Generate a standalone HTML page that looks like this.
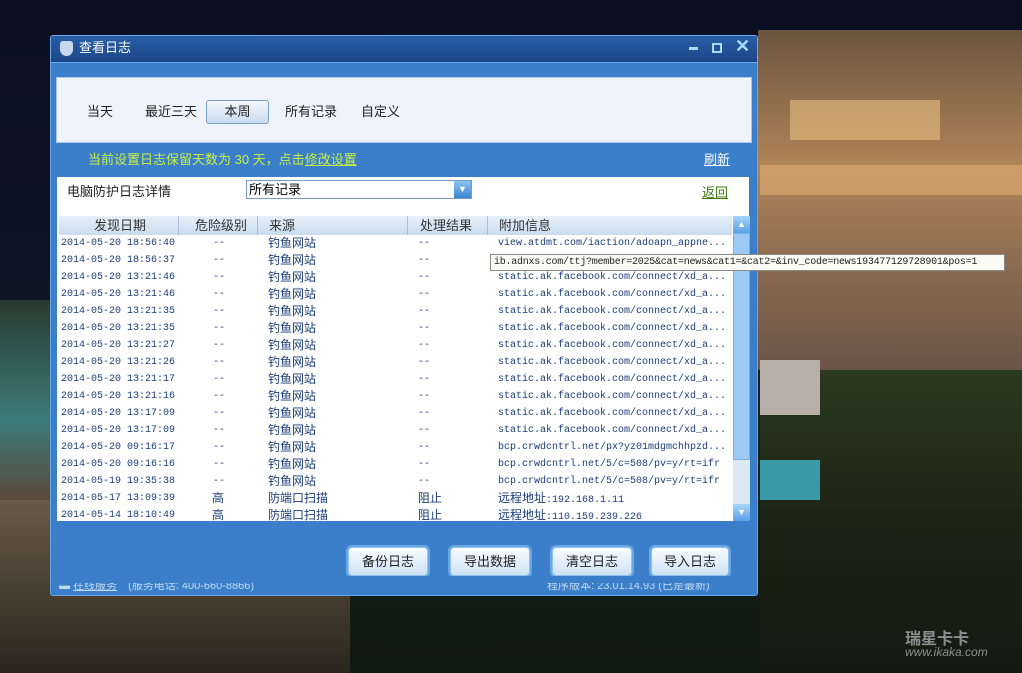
<!DOCTYPE html>
<html><head><meta charset="utf-8"><style>
*{margin:0;padding:0;box-sizing:border-box}
body{width:1022px;height:673px;overflow:hidden;position:relative;font-family:"Liberation Sans","Noto Sans CJK SC",sans-serif;font-size:12px;background:#0b1326}
.abs{position:absolute}
.win{left:50px;top:35px;width:708px;height:561px;background:#3b7fcb;border:1px solid #6aa6e6;border-radius:3px;overflow:hidden}
.title{left:0;top:0;width:706px;height:27px;background:linear-gradient(#2a5ea6,#1b4687);color:#fff;font-size:13px;line-height:24px;padding-left:28px;border-bottom:1px solid #6aa6e6}
.panel{left:5px;top:41px;width:696px;height:66px;background:#eef4f9;border:1px solid #a9c8e8}
.tab{top:64px;height:24px;line-height:24px;font-size:13px;color:#222}
.white{left:6px;top:141px;width:692px;height:344px;background:#fff}
.hdr{top:180px;height:19px;background:linear-gradient(#e7f0fa,#c9dcf0);color:#333;font-size:13px;line-height:19px}
.row{font-family:"Liberation Mono","Noto Sans CJK SC",monospace;font-size:10px;color:#1a3d78;height:17px;line-height:17px;white-space:nowrap}
.cn{font-family:"Liberation Sans","Noto Sans CJK SC",sans-serif;font-size:12px}
.btn{top:511px;width:80px;height:29px;border:1px solid #8fc2f0;border-radius:4px;background:linear-gradient(#f6fbff,#cfe3f6);color:#222;font-size:13px;line-height:27px;text-align:center;box-shadow:0 0 0 2px #6aa8e4}
</style></head><body>
<div class="abs" style="left:0;top:0;width:1022px;height:673px;background:linear-gradient(#0a0f22 0%,#0d1426 40%,#14201e 60%,#0f1a10 100%)"></div>
<div class="abs" style="left:0;top:300px;width:50px;height:200px;background:linear-gradient(#2a3a30,#3c7b7a 60%,#5a4a3a)"></div>
<div class="abs" style="left:0;top:500px;width:350px;height:173px;background:linear-gradient(#6a5a48,#2a261c)"></div>
<div class="abs" style="left:758px;top:30px;width:264px;height:340px;background:linear-gradient(#6b5540,#b08458 40%,#8a6a50 70%,#6a5548)"></div>
<div class="abs" style="left:790px;top:100px;width:150px;height:40px;background:#e8c080;opacity:.6"></div>
<div class="abs" style="left:760px;top:165px;width:262px;height:30px;background:#d8a870;opacity:.7"></div>
<div class="abs" style="left:760px;top:370px;width:262px;height:303px;background:linear-gradient(#2a3a20,#1c2414 50%,#141a10)"></div>
<div class="abs" style="left:760px;top:360px;width:60px;height:55px;background:#b8b0a8"></div>
<div class="abs" style="left:760px;top:460px;width:60px;height:40px;background:#3a9aa8"></div>
<div class="abs" style="left:905px;top:625px;color:#8a8f90;font-size:16px;font-weight:bold">瑞星卡卡</div>
<div class="abs" style="left:905px;top:645px;color:#8a8f90;font-size:12px;font-style:italic">www.ikaka.com</div>

<div class="abs win">
 <div class="abs title">查看日志
  <div class="abs" style="left:9px;top:5px;width:13px;height:15px;background:#c8d8ec;border-radius:3px 3px 7px 7px"></div>
  <div class="abs" style="left:638px;top:11px;width:9px;height:3px;background:#a8dcff"></div>
  <div class="abs" style="left:661px;top:7px;width:10px;height:10px;border:2px solid #a8dcff"></div>
  <div class="abs" style="left:684px;top:-2px;color:#a8dcff;font-size:18px;font-weight:bold">✕</div>
 </div>
  <div class="abs panel"></div>
  <div class="abs tab" style="left:36px">当天</div>
  <div class="abs tab" style="left:94px">最近三天</div>
  <div class="abs tab" style="left:155px;width:63px;border:1px solid #7aa0c8;border-radius:3px;background:linear-gradient(#f4f8fc,#c8dcef);text-align:center;height:24px;line-height:22px">本周</div>
  <div class="abs tab" style="left:234px">所有记录</div>
  <div class="abs tab" style="left:310px">自定义</div>
  <div class="abs" style="left:37px;top:113px;color:#c8f040;font-size:13px">当前设置日志保留天数为 30 天，点击<u>修改设置</u></div>
  <div class="abs" style="left:653px;top:113px;color:#fff;font-size:13px;text-decoration:underline">刷新</div>
  <div class="abs white"></div>
  <div class="abs" style="left:16px;top:145px;font-size:13px;color:#222">电脑防护日志详情</div>
  <div class="abs" style="left:195px;top:144px;width:226px;height:19px;border:1px solid #7a9cc0;font-size:13px;line-height:17px;padding-left:2px;background:#fff">所有记录
   <div class="abs" style="right:0;top:0;width:17px;height:17px;background:linear-gradient(#8cc4f4,#3a86d0);color:#fff;font-size:9px;text-align:center;line-height:17px">▼</div></div>
  <div class="abs" style="left:651px;top:146px;color:#3a7a10;font-size:13px;text-decoration:underline">返回</div>
  <div class="abs hdr" style="left:8px;width:673px"></div>
  <div class="abs hdr" style="left:43px;background:none">发现日期</div>
  <div class="abs hdr" style="left:144px;background:none">危险级别</div>
  <div class="abs hdr" style="left:218px;background:none">来源</div>
  <div class="abs hdr" style="left:369px;background:none">处理结果</div>
  <div class="abs hdr" style="left:448px;background:none">附加信息</div>
  <div class="abs" style="left:127px;top:180px;width:1px;height:19px;background:#a8c0dc"></div>
  <div class="abs" style="left:206px;top:180px;width:1px;height:19px;background:#a8c0dc"></div>
  <div class="abs" style="left:356px;top:180px;width:1px;height:19px;background:#a8c0dc"></div>
  <div class="abs" style="left:436px;top:180px;width:1px;height:19px;background:#a8c0dc"></div>
  <div class="abs" style="left:682px;top:180px;width:17px;height:305px;background:#dce8f4"></div>
  <div class="abs" style="left:682px;top:180px;width:17px;height:17px;background:linear-gradient(#a8d4fa,#5aa2e6);color:#fff;font-size:9px;text-align:center;line-height:17px">▲</div>
  <div class="abs" style="left:682px;top:197px;width:17px;height:227px;background:#9ccaf2;border:1px solid #7ab0e0"></div>
  <div class="abs" style="left:682px;top:468px;width:17px;height:17px;background:linear-gradient(#a8d4fa,#5aa2e6);color:#fff;font-size:9px;text-align:center;line-height:17px">▼</div>
  <div class="abs" style="left:10px;top:199px;width:672px;height:286px;overflow:hidden">
   <div id="rows"></div>
  </div>
  <div class="abs btn" style="left:297px">备份日志</div>
  <div class="abs btn" style="left:399px">导出数据</div>
  <div class="abs btn" style="left:501px">清空日志</div>
  <div class="abs btn" style="left:600px;width:78px">导入日志</div>
 <div class="abs" style="left:8px;top:541px;color:#c0d8f0;font-size:11px;white-space:nowrap">▬ <u>在线服务</u>　(服务电话: 400-660-8866)</div>
 <div class="abs" style="left:496px;top:541px;color:#c0d8f0;font-size:11px;white-space:nowrap">程序版本: 23.01.14.93 (已是最新)</div>
 <div class="abs" style="left:0;top:540px;width:706px;height:7px;background:#3b7fcb"></div>
</div>
<div class="abs" style="left:490px;top:254px;width:515px;height:17px;background:#fbfbf6;border:1px solid #888;font-family:'Liberation Mono',monospace;font-size:10px;line-height:15px;padding-left:3px;color:#222;white-space:nowrap;letter-spacing:-0.25px">ib.adnxs.com/ttj?member=2025&amp;cat=news&amp;cat1=&amp;cat2=&amp;inv_code=news193477129728901&amp;pos=1</div>
<script>
var d=[["2014-05-20 18:56:40","--","钓鱼网站","--","view.atdmt.com/iaction/adoapn_appne..."],
["2014-05-20 18:56:37","--","钓鱼网站","--",""],
["2014-05-20 13:21:46","--","钓鱼网站","--","static.ak.facebook.com/connect/xd_a..."],
["2014-05-20 13:21:46","--","钓鱼网站","--","static.ak.facebook.com/connect/xd_a..."],
["2014-05-20 13:21:35","--","钓鱼网站","--","static.ak.facebook.com/connect/xd_a..."],
["2014-05-20 13:21:35","--","钓鱼网站","--","static.ak.facebook.com/connect/xd_a..."],
["2014-05-20 13:21:27","--","钓鱼网站","--","static.ak.facebook.com/connect/xd_a..."],
["2014-05-20 13:21:26","--","钓鱼网站","--","static.ak.facebook.com/connect/xd_a..."],
["2014-05-20 13:21:17","--","钓鱼网站","--","static.ak.facebook.com/connect/xd_a..."],
["2014-05-20 13:21:16","--","钓鱼网站","--","static.ak.facebook.com/connect/xd_a..."],
["2014-05-20 13:17:09","--","钓鱼网站","--","static.ak.facebook.com/connect/xd_a..."],
["2014-05-20 13:17:09","--","钓鱼网站","--","static.ak.facebook.com/connect/xd_a..."],
["2014-05-20 09:16:17","--","钓鱼网站","--","bcp.crwdcntrl.net/px?yz01mdgmchhpzd..."],
["2014-05-20 09:16:16","--","钓鱼网站","--","bcp.crwdcntrl.net/5/c=508/pv=y/rt=ifr"],
["2014-05-19 19:35:38","--","钓鱼网站","--","bcp.crwdcntrl.net/5/c=508/pv=y/rt=ifr"],
["2014-05-17 13:09:39","高","防端口扫描","阻止","<span class=cn>远程地址</span>:192.168.1.11"],
["2014-05-14 18:10:49","高","防端口扫描","阻止","<span class=cn>远程地址</span>:110.159.239.226"]];
var h="";d.forEach(function(r,i){var t=i*17;
h+='<div class="abs row" style="top:'+t+'px;left:0">'+r[0]+'</div>'+
'<div class="abs row'+(r[1]=="高"?' cn':'')+'" style="top:'+t+'px;left:'+(r[1]=="高"?151:152)+'px">'+r[1]+'</div>'+
'<div class="abs row cn" style="top:'+t+'px;left:207px">'+r[2]+'</div>'+
'<div class="abs row'+(r[3]=="阻止"?' cn':'')+'" style="top:'+t+'px;left:357px">'+r[3]+'</div>'+
'<div class="abs row" style="top:'+t+'px;left:437px">'+r[4]+'</div>';});
document.getElementById("rows").innerHTML=h;
</script>
</body></html>
